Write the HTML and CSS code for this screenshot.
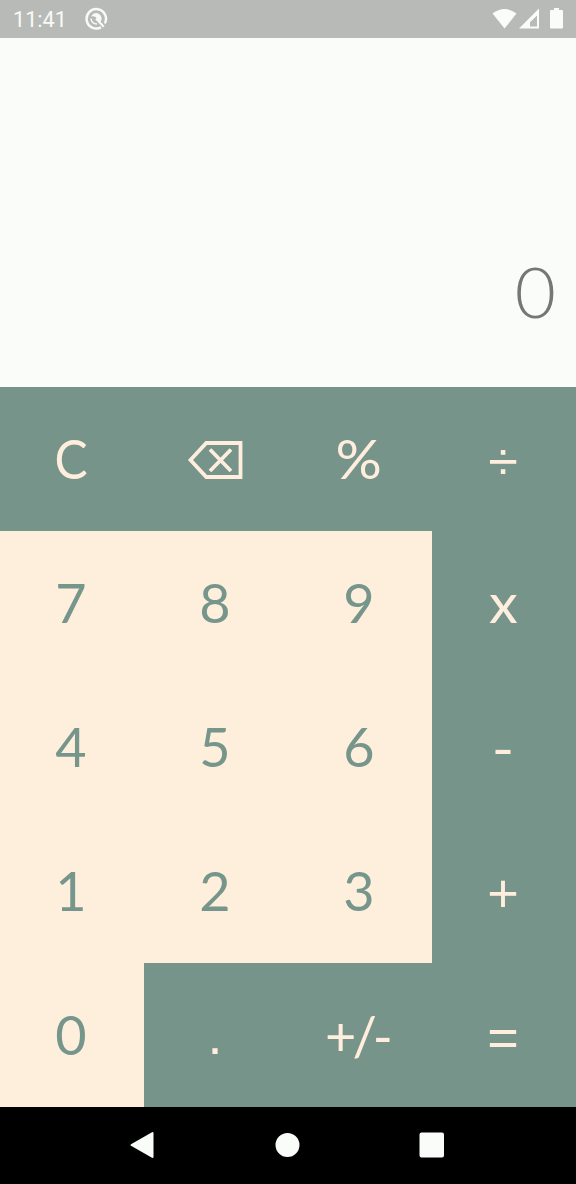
FILE: index.html
```html
<!DOCTYPE html>
<html lang="en">
<head>
<meta charset="utf-8">
<title>Calculator</title>
<link rel="stylesheet" href="styles.css">
</head>
<body>
<div class="phone">
  <header class="status">
    <span class="time">11:41</span>
    <svg class="app" width="24" height="24" viewBox="0 0 24 24" fill="none" stroke="#f8faf7">
      <path d="M20.800 16.500A9.700 9.700 0 1 0 17 20.300" stroke-width="2.500"/>
      <path d="M7 9.500Q9.500 5.500 13.500 6.200Q17.800 7.500 17.600 12.500L16.500 15L11.500 10Q9.500 8.800 7 9.500Z" fill="#f8faf7" stroke="none"/>
      <path d="M7 11.500Q7.500 16.800 13 17" stroke-width="1.600"/>
      <path d="M12 11.500L19.800 19.800" stroke-width="2.200"/>
    </svg>
    <svg class="signals" width="74" height="24" viewBox="0 0 74 24" fill="#fafcf9">
      <path d="M.5 6.500Q12.500-2.500 24.500 6.500L12.500 21.500Z"/>
      <path fill-rule="evenodd" d="M27 21.500L47 1.500V21.500ZM38 19.500H45V8.500L38 15.300Z"/>
      <path d="M62 1h5v2h3q1 0 1 1v16.500q0 1-1 1H59q-1 0-1-1V4q0-1 1-1h3Z"/>
    </svg>
  </header>
  <main class="display"><span>0</span></main>
  <section class="keys">
    <button class="key op letter"><span>C</span></button>
    <button class="key op" aria-label="Backspace">
      <svg class="backspace" width="56" height="40" viewBox="0 0 56 40" fill="none" stroke="#ffeedd" stroke-width="3.800">
        <path d="M3.500 20L19.300 3H53.500V37H19.300Z"/>
        <path d="M23 9.500L44 31M44 9.500L23 31"/>
      </svg>
    </button>
    <button class="key op percent"><span>%</span></button>
    <button class="key op sign">÷</button>
    <button class="key">7</button>
    <button class="key">8</button>
    <button class="key">9</button>
    <button class="key op times"><span>x</span></button>
    <button class="key">4</button>
    <button class="key">5</button>
    <button class="key">6</button>
    <button class="key op minus"><span>-</span></button>
    <button class="key">1</button>
    <button class="key">2</button>
    <button class="key">3</button>
    <button class="key op sign">+</button>
    <button class="key">0</button>
    <button class="key op dot">.</button>
    <button class="key op toggle">+/-</button>
    <button class="key op sign">=</button>
  </section>
  <nav class="nav">
    <svg width="576" height="77" viewBox="0 0 576 77" fill="#fafcf9" stroke="#fafcf9" stroke-linejoin="round" stroke-width="2">
      <path d="M131.500 38L152.500 26V50Z"/>
      <circle cx="287.500" cy="38" r="11"/>
      <rect x="420.500" y="26.500" width="22.500" height="23" rx="1"/>
    </svg>
  </nav>
</div>
</body>
</html>
```

FILE: styles.css
```css
* { box-sizing: border-box; }
body { margin: 0; }
.phone {
  width: 576px;
  height: 1184px;
  display: grid;
  grid-template-rows: 38px 349px 720px 77px;
  overflow: hidden;
  font-family: Lato, "Open Sans", sans-serif;
  background: #000;
}
.status {
  display: flex;
  align-items: center;
  background: #b8bab7;
  color: #f8faf7;
  padding: 0 10px 0 13px;
}
.time {
  font: 21.6px/38px Roboto, sans-serif;
  width: 71px;
  padding-top: 1px;
}
.signals { margin-left: auto; }
.display {
  background: #fafcf9;
  color: #757675;
  font-size: 71px;
  font-weight: 300;
  line-height: 80px;
  display: flex;
  justify-content: flex-end;
  align-items: flex-end;
  padding: 0 20px 56px 0;
}
.keys {
  display: grid;
  grid-template: repeat(5, 144px) / repeat(4, 144px);
  background: #feeedc;
}
.key {
  border: 0;
  margin: 0;
  padding: 0 2px 1px 0;
  display: flex;
  align-items: center;
  justify-content: center;
  font: 400 54px/64px Lato, "Open Sans", sans-serif;
  background: #feeedc;
  color: #77968b;
}
.op { background: #76948a; color: #ffeedd; }
.letter span { transform: scaleX(.92); }
.percent span { transform: scaleX(1.07); }
.times span { transform: scaleX(1.07); }
.minus { padding-top: 2px; }
.minus span { transform: scaleX(1.12); }
.sign, .dot { font-family: "Liberation Sans", Arial, sans-serif; }
.sign { padding-top: 5px; }
.dot { padding-top: 1px; }
.toggle { letter-spacing: -4px; padding: 2px 6px 0 0; }
.backspace { margin-top: 3px; }
.nav { background: #000; }
.nav svg { display: block; }
```
